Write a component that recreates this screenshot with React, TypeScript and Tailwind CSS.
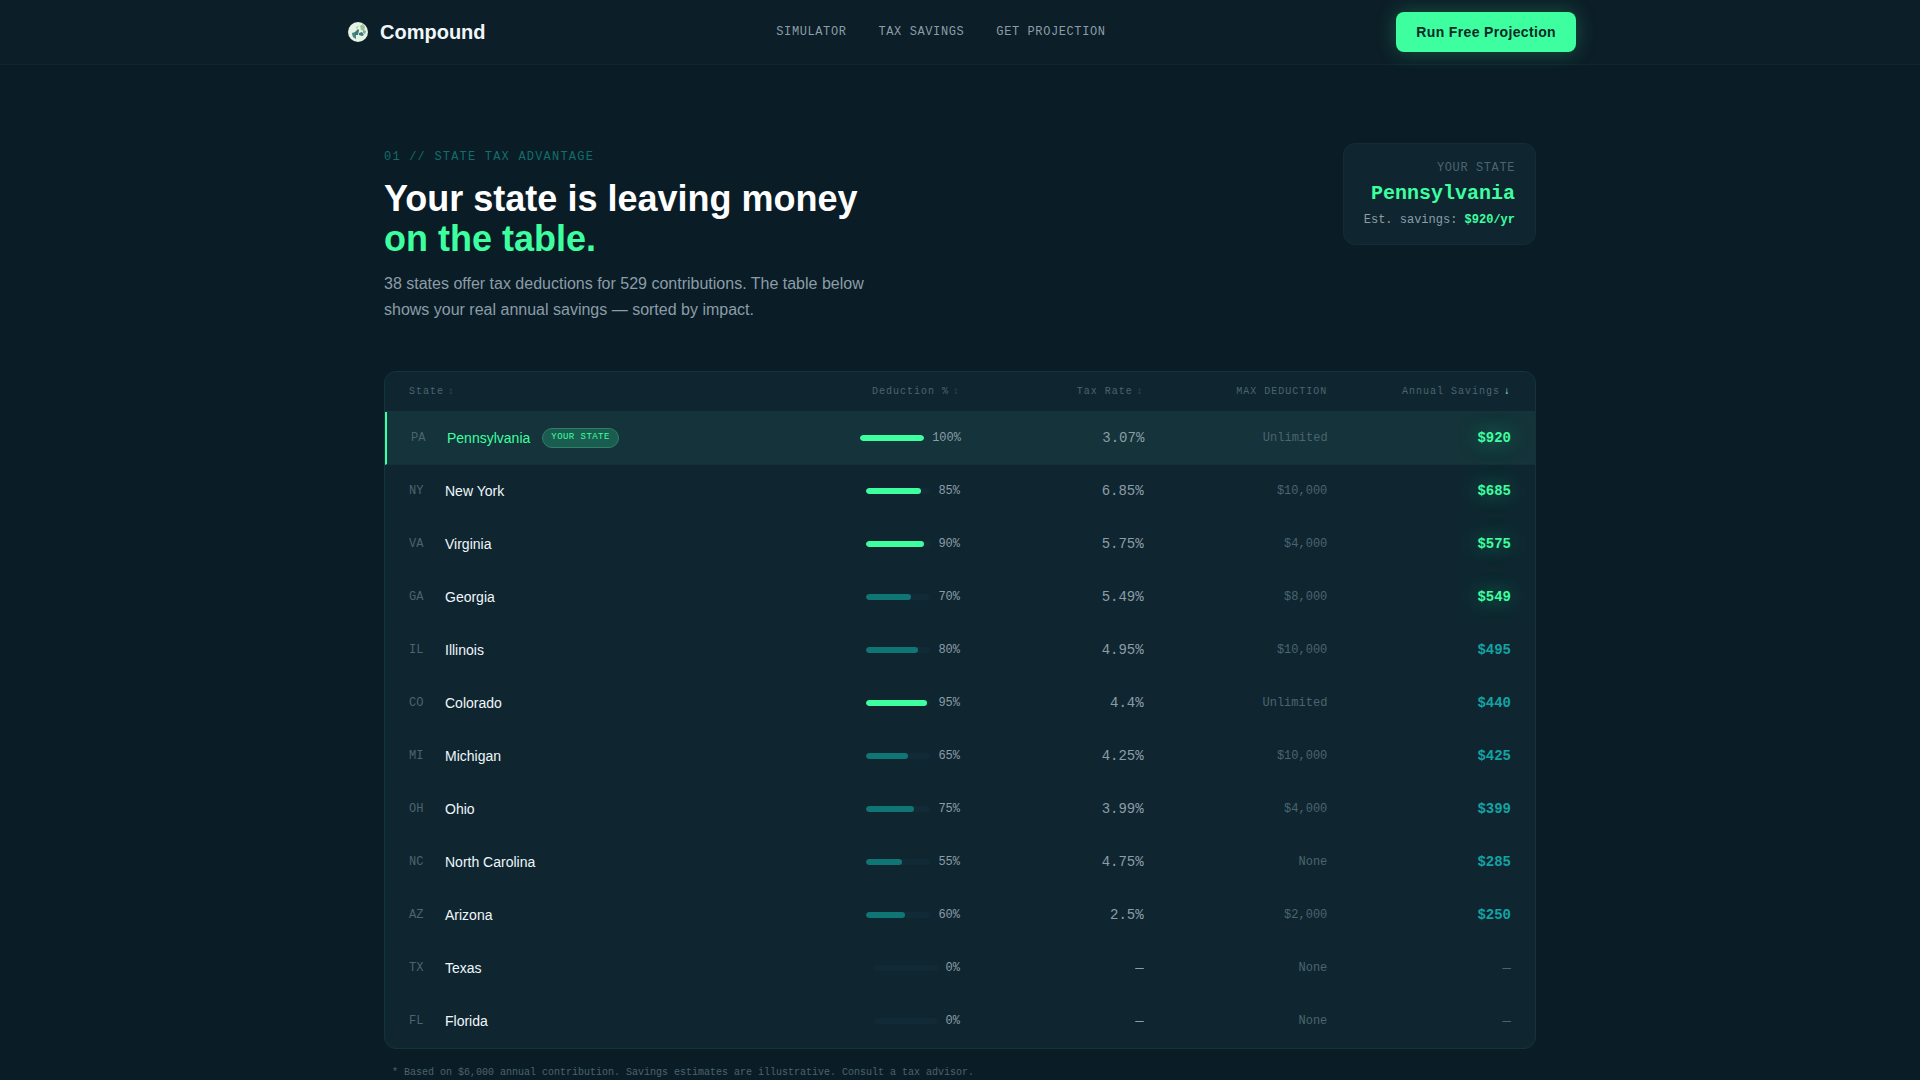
type StateRow = {
  code: string;
  name: string;
  deduction: number;
  rate: string;
  max: string;
  savings: number;
};

const HOME_STATE = "PA";

const rows: StateRow[] = [
  { code: "PA", name: "Pennsylvania", deduction: 100, rate: "3.07%", max: "Unlimited", savings: 920 },
  { code: "NY", name: "New York", deduction: 85, rate: "6.85%", max: "$10,000", savings: 685 },
  { code: "VA", name: "Virginia", deduction: 90, rate: "5.75%", max: "$4,000", savings: 575 },
  { code: "GA", name: "Georgia", deduction: 70, rate: "5.49%", max: "$8,000", savings: 549 },
  { code: "IL", name: "Illinois", deduction: 80, rate: "4.95%", max: "$10,000", savings: 495 },
  { code: "CO", name: "Colorado", deduction: 95, rate: "4.4%", max: "Unlimited", savings: 440 },
  { code: "MI", name: "Michigan", deduction: 65, rate: "4.25%", max: "$10,000", savings: 425 },
  { code: "OH", name: "Ohio", deduction: 75, rate: "3.99%", max: "$4,000", savings: 399 },
  { code: "NC", name: "North Carolina", deduction: 55, rate: "4.75%", max: "None", savings: 285 },
  { code: "AZ", name: "Arizona", deduction: 60, rate: "2.5%", max: "$2,000", savings: 250 },
  { code: "TX", name: "Texas", deduction: 0, rate: "—", max: "None", savings: 0 },
  { code: "FL", name: "Florida", deduction: 0, rate: "—", max: "None", savings: 0 },
];

const mono = "font-['Liberation_Mono',monospace]";

const Logo = () => (
  <svg viewBox="0 0 28 28" className="h-7 w-7" aria-hidden="true">
    <circle cx="14" cy="14" r="10" fill="#e4f3e6" />
    <path d="M8 15l3-1 1 2v5l-3-2-1-3z" fill="#4a8488" />
    <path d="M11 14l3-3 1 1-1 5h-3z" fill="#3c7a62" />
    <path d="M15 15l3-1 2 3-2 1-3-1z" fill="#3f7480" />
    <path d="M16 8l3-2 2 3-1 4-3-1z" fill="#9cc294" />
    <path d="M12 9l3-2-1 3-2 1z" fill="#b5d6b4" />
    <path d="M19 12l3 1-1 3-2-1z" fill="#7fae8c" />
  </svg>
);

const Navbar = () => (
  <nav className="border-b border-[#11262f] bg-[#0c1e27]">
    <div className="mx-auto flex h-16 max-w-7xl items-center justify-between px-6">
      <a href="#" className="flex items-center gap-2">
        <Logo />
        <span className="text-xl font-bold text-[#f0f7fa]">Compound</span>
      </a>
      <div className={`flex gap-8 text-xs uppercase tracking-wider text-[#8b9da7] ${mono}`}>
        <a href="#simulator">Simulator</a>
        <a href="#tax-savings">Tax Savings</a>
        <a href="#projection">Get Projection</a>
      </div>
      <button className="h-10 rounded-lg bg-[#3dffa0] px-5 text-sm font-bold tracking-wide text-[#0a2a26] shadow-[0_0_20px_rgba(61,255,160,0.25)]">
        Run Free Projection
      </button>
    </div>
  </nav>
);

const YourStateCard = () => (
  <div className={`rounded-xl border border-[#122d36] bg-[#0f2631] px-5 py-4 text-right ${mono}`}>
    <div className="mb-1 text-xs uppercase tracking-wider text-[#4c646f]">Your State</div>
    <div className="text-xl font-bold text-[#3dffa0]">Pennsylvania</div>
    <div className="mt-1 text-xs text-[#8b9da7]">
      Est. savings: <span className="font-bold text-[#3dffa0]">$920/yr</span>
    </div>
  </div>
);

const SortButton = ({ label, active }: { label: string; active?: boolean }) => (
  <button className="inline-flex items-center gap-1 tracking-widest">
    {label}
    <span className={active ? "text-[#b4f0d8]" : "opacity-70"}>{active ? "↓" : "↕"}</span>
  </button>
);

const DeductionBar = ({ value }: { value: number }) => (
  <div className="flex items-center justify-end gap-2">
    <div className="h-1.5 w-16 overflow-hidden rounded-full bg-[#122a35]">
      <div
        className={`h-full rounded-full ${value >= 85 ? "bg-[#3dffa0]" : "bg-[#0f7675]"}`}
        style={{ width: `${value}%` }}
      />
    </div>
    <span className={`text-xs text-[#8b9da7] ${mono}`}>{value}%</span>
  </div>
);

const savingsStyle = (savings: number) => {
  if (savings > 500) return "font-bold text-[#3dffa0] [text-shadow:0_0_20px_rgba(61,255,160,0.5)]";
  if (savings > 0) return "font-bold text-[#14a3a3]";
  return "text-[#4c646f]";
};

const TableRow = ({ row }: { row: StateRow }) => {
  const isHome = row.code === HOME_STATE;

  return (
    <tr
      className={`grid grid-cols-12 items-center border-b px-6 py-4 last:border-transparent ${
        isHome ? "border-b-[#11303a] border-l-2 border-l-[#3dffa0] bg-[#14333a]" : "border-[#0f2732]"
      }`}
    >
      <td className="col-span-4 flex h-5 items-center gap-3">
        <span className={`w-6 text-xs text-[#4c646f] ${mono}`}>{row.code}</span>
        <span className={`text-sm ${isHome ? "text-[#3dffa0]" : "text-[#f0f7fa]"}`}>{row.name}</span>
        {isHome && (
          <span
            className={`rounded-full border border-[#2b8065] bg-[#1b5c50] px-2 pt-0.5 pb-1 text-[9px] leading-3 uppercase tracking-wider text-[#3dffa0] ${mono}`}
          >
            Your State
          </span>
        )}
      </td>
      <td className="col-span-2">
        <DeductionBar value={row.deduction} />
      </td>
      <td className={`col-span-2 text-right text-sm text-[#8b9da7] ${mono}`}>{row.rate}</td>
      <td className={`col-span-2 text-right text-xs text-[#4c646f] ${mono}`}>{row.max}</td>
      <td className={`col-span-2 text-right text-sm ${mono} ${savingsStyle(row.savings)}`}>
        {row.savings > 0 ? `$${row.savings}` : "—"}
      </td>
    </tr>
  );
};

const SavingsTable = () => (
  <div className="overflow-hidden rounded-xl border border-[#14343b] bg-[#0f2631]">
    <table className="block">
      <thead className={`block text-[10px] leading-[15px] text-[#4c646f] ${mono}`}>
        <tr className="grid grid-cols-12 border-b border-[#14333a] px-6 py-3 text-right *:font-normal">
          <th className="col-span-4 flex">
            <SortButton label="State" />
          </th>
          <th className="col-span-2 flex justify-end">
            <SortButton label="Deduction %" />
          </th>
          <th className="col-span-2 flex justify-end">
            <SortButton label="Tax Rate" />
          </th>
          <th className="col-span-2 uppercase tracking-widest">Max Deduction</th>
          <th className="col-span-2 flex justify-end">
            <SortButton label="Annual Savings" active />
          </th>
        </tr>
      </thead>
      <tbody className="block">
        {rows.map((row) => (
          <TableRow key={row.code} row={row} />
        ))}
      </tbody>
    </table>
  </div>
);

export default function App() {
  return (
    <div className="min-h-screen bg-[#0a1c26] font-['Liberation_Sans',Arial,sans-serif]">
      <Navbar />
      <main className="mx-auto max-w-6xl pt-[78px]">
        <header className="mb-12 flex items-start justify-between">
          <div className="pt-1.5">
            <p className={`mb-3.5 text-xs uppercase tracking-widest text-[#116e6c] ${mono}`}>
              01 // State Tax Advantage
            </p>
            <h1 className="text-4xl font-bold text-white">
              Your state is leaving money
              <br />
              <span className="text-[#3dffa0]">on the table.</span>
            </h1>
            <p className="mt-3 max-w-lg text-base leading-[26px] text-[#8b9da7]">
              38 states offer tax deductions for 529 contributions. The table below shows your real annual savings —
              sorted by impact.
            </p>
          </div>
          <YourStateCard />
        </header>
        <SavingsTable />
        <p className={`mt-4 px-2 text-[10px] leading-[15px] text-[#4c646f] ${mono}`}>
          * Based on $6,000 annual contribution. Savings estimates are illustrative. Consult a tax advisor.
        </p>
      </main>
    </div>
  );
}
